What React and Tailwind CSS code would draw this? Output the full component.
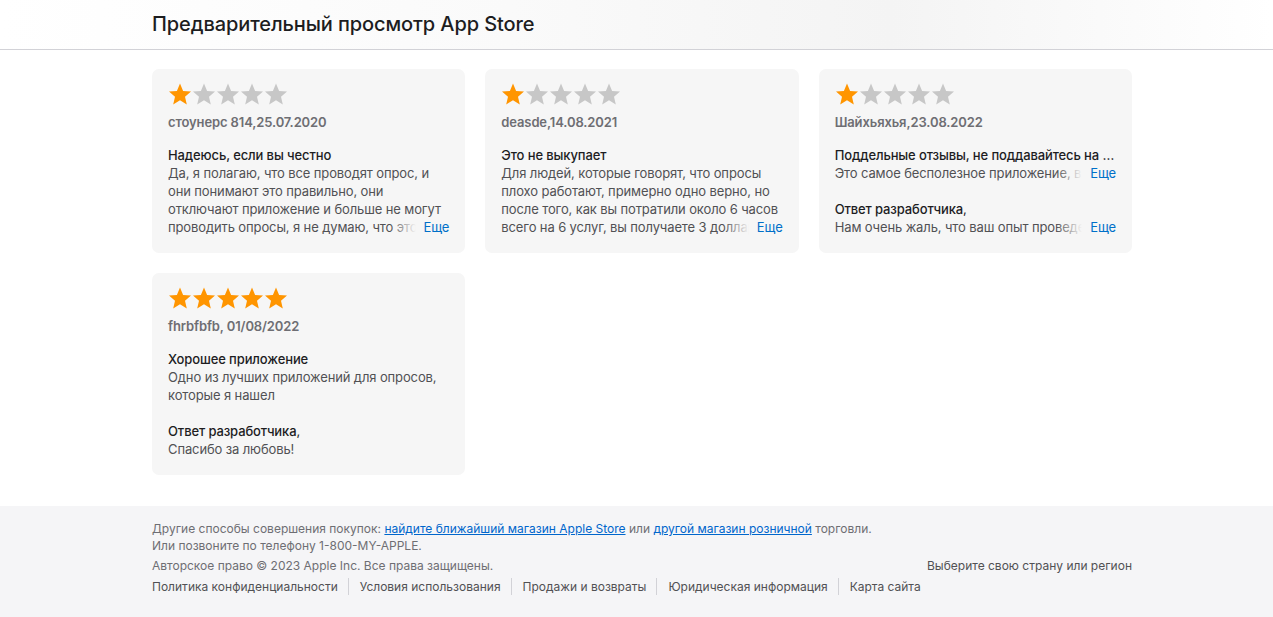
import React from "react";

const reviews = [
  {
    rating: 1,
    author: "стоунерс 814,25.07.2020",
    title: "Надеюсь, если вы честно",
    body: "Да, я полагаю, что все проводят опрос, и они понимают это правильно, они отключают приложение и больше не могут проводить опросы, я не думаю, что это правильно, и я надеюсь, что вы исправите это.",
    clamp: "line-clamp-4",
  },
  {
    rating: 1,
    author: "deasde,14.08.2021",
    title: "Это не выкупает",
    body: "Для людей, которые говорят, что опросы плохо работают, примерно одно верно, но после того, как вы потратили около 6 часов всего на 6 услуг, вы получаете 3 доллара, и это не стоит вашего времени.",
    clamp: "line-clamp-4",
  },
  {
    rating: 1,
    author: "Шайхьяхья,23.08.2022",
    title: "Поддельные отзывы, не поддавайтесь на них",
    body: "Это самое бесполезное приложение, в котором я когда-либо был.",
    clamp: "line-clamp-1",
    reply: "Нам очень жаль, что ваш опыт проведения опросов был неудовлетворительным.",
  },
];

const Star = ({ on }) => (
  <svg width="24" height="24" viewBox="0 0 24 24" className="shrink-0">
    <path
      d="M12 1.6l3.1 7.3 7.9.6-6 5.2 1.8 7.7L12 18.3l-6.8 4.1 1.8-7.7-6-5.2 7.9-.6z"
      fill={on ? "#ff9500" : "#c7c7c7"}
    />
  </svg>
);

const Stars = ({ rating }) => (
  <div className="flex">
    {[0, 1, 2, 3, 4].map((i) => (
      <Star key={i} on={i < rating} />
    ))}
  </div>
);

const Clamped = ({ text, clamp }) => (
  <div className="relative">
    <p className={`${clamp} text-[#515154]`}>{text}</p>
    <span className="absolute right-0 bottom-0 pl-[34px] bg-[linear-gradient(to_right,rgba(246,246,246,0),#f6f6f6_26px)] text-[#0070c9]">
      Еще
    </span>
  </div>
);

const Card = ({ children }) => (
  <div className="bg-[#f6f6f6] rounded-[7px] pt-[13px] pb-[17px] px-4 text-[13px] leading-[18px] tracking-[-0.12px]">
    {children}
  </div>
);

const Author = ({ children }) => (
  <div className="mt-[7px] font-semibold text-[#6e6e73]">{children}</div>
);

export default function App() {
  return (
    <div className="min-h-screen flex flex-col bg-white font-['Inter','Liberation_Sans',sans-serif] text-[#1d1d1f] antialiased">
      <header className="h-[50px] shrink-0 border-b border-[#d2d2d7] bg-[linear-gradient(90deg,#fff_0%,#fafafa_40%,#f4f4f4_70%,#fff_100%)] pl-[152px] flex items-center">
        <h1 className="text-[20px] font-medium tracking-[-0.1px] text-[#1d1d1f] -mt-[2px]">
          Предварительный просмотр App Store
        </h1>
      </header>

      <main className="pl-[152px] pt-[19px] pb-[31px]">
        <div className="w-[980px] grid grid-cols-3 gap-5 items-start">
          {reviews.map((r, i) => (
            <Card key={i}>
              <Stars rating={r.rating} />
              <Author>{r.author}</Author>
              <h3 className="mt-[15px] font-medium text-[#1d1d1f] truncate">{r.title}</h3>
              <Clamped text={r.body} clamp={r.clamp} />
              {r.reply && (
                <div className="mt-[18px]">
                  <div className="font-medium">Ответ разработчика<span className="font-normal">,</span></div>
                  <Clamped text={r.reply} clamp="line-clamp-1" />
                </div>
              )}
            </Card>
          ))}
          <Card>
            <Stars rating={5} />
            <Author>fhrbfbfb, 01/08/2022</Author>
            <h3 className="mt-[15px] font-medium">Хорошее приложение</h3>
            <p className="text-[#515154]">Одно из лучших приложений для опросов, которые я нашел</p>
            <div className="mt-[18px]">
              <div className="font-medium">Ответ разработчика<span className="font-normal">,</span></div>
              <p className="text-[#515154]">Спасибо за любовь!</p>
            </div>
          </Card>
        </div>
      </main>

      <footer className="flex-1 bg-[#f5f5f7] pl-[152px] pt-[14px] pb-[24px] text-[12px] leading-[17px] text-[#6e6e73]">
        <div className="w-[980px]">
          <p>
            Другие способы совершения покупок:{" "}
            <a className="text-[#0066cc] underline">найдите ближайший магазин Apple Store</a> или{" "}
            <a className="text-[#0066cc] underline">другой магазин розничной</a> торговли.
          </p>
          <p>Или позвоните по телефону 1-800-MY-APPLE.</p>
          <div className="mt-[3px] flex justify-between">
            <span>Авторское право © 2023 Apple Inc. Все права защищены.</span>
            <span className="text-[#515154]">Выберите свою страну или регион</span>
          </div>
          <ul className="mt-[4px] flex text-[#515154]">
            {["Политика конфиденциальности", "Условия использования", "Продажи и возвраты", "Юридическая информация", "Карта сайта"].map((l, i, a) => (
              <li key={l} className={i < a.length - 1 ? "pr-[10px] mr-[11px] border-r border-[#d2d2d7]" : ""}>
                {l}
              </li>
            ))}
          </ul>
        </div>
      </footer>
    </div>
  );
}
